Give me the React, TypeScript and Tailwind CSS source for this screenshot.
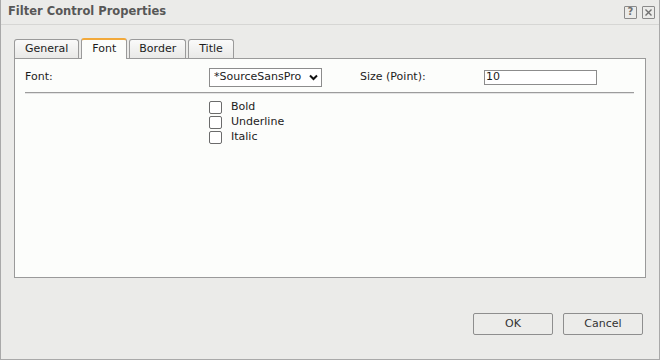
import React from 'react';

const font = { fontFamily: '"DejaVu Sans", Verdana, sans-serif' };

const Check: React.FC<{ label: string }> = ({ label }) => (
  <label className="flex items-center h-[15px]">
    <span className="w-[13px] h-[13px] border border-[#6b6b6b] rounded-[2px] bg-white mr-[9px]" />
    <span>{label}</span>
  </label>
);

const tabIdle = 'h-[19px] flex items-center border border-b-0 border-[#9a9a9a] rounded-t-[3px] bg-gradient-to-b from-[#fafafa] to-[#e9e9e7]';

export default function App() {
  return (
    <div className="w-[660px] h-[360px] bg-[#ebebe9] border-x border-b border-[#a9a9a9] flex flex-col text-[11px] text-[#1c1c1c]" style={font}>
      {/* title bar */}
      <div className="h-[25px] flex items-center justify-between border-b border-[#d6d6d4] pl-[7px] pr-[4px]">
        <span className="font-bold text-[11.5px] text-[#575757]">Filter Control Properties</span>
        <div className="flex gap-[5px]">
          <span className="w-[13px] h-[13px] border border-[#8a8a8a] rounded-[1px] flex items-center justify-center text-[10px] font-bold text-[#707070] leading-none">?</span>
          <span className="w-[13px] h-[13px] border border-[#8a8a8a] rounded-[1px] flex items-center justify-center">
            <svg width="9" height="9" viewBox="0 0 9 9"><path d="M1.5 1.5L7.5 7.5M7.5 1.5L1.5 7.5" stroke="#707070" strokeWidth="1.4" /></svg>
          </span>
        </div>
      </div>

      <div className="flex-1 flex flex-col px-[13px] pt-[13px]">
        {/* tabs */}
        <div className="flex items-end gap-[2px] h-[20px] relative z-10">
          <div className={`${tabIdle} px-[10px]`}>General</div>
          <div className="h-[21px] px-[10px] flex items-center border border-b-0 border-[#9a9a9a] border-t-2 border-t-[#f2a93b] rounded-t-[3px] bg-[#fcfdfb] -mb-[1px]">Font</div>
          <div className={`${tabIdle} px-[9px]`}>Border</div>
          <div className={`${tabIdle} px-[10px]`}>Title</div>
        </div>

        {/* panel */}
        <div className="h-[220px] border border-[#9a9a9a] bg-[#fcfdfb] px-[10px] pt-[8px]">
          <div className="flex items-center h-[20px]">
            <span className="w-[184px]">Font:</span>
            <div className="w-[113px] h-[19px] border border-[#8c8c8c] bg-white flex items-center justify-between pl-[4px] pr-[3px]">
              <span>*SourceSansPro</span>
              <svg width="9" height="7" viewBox="0 0 9 7"><path d="M1 1.5L4.5 5L8 1.5" fill="none" stroke="#111" strokeWidth="2" /></svg>
            </div>
            <span className="ml-[38px] w-[124px]">Size (Point):</span>
            <div className="w-[113px] h-[15px] border border-[#8c8c8c] bg-white flex items-center pl-[1px]">10</div>
          </div>
          <div className="mt-[5px] border-t border-[#9c9c9c] border-b border-b-[#e4e4e4] mr-[1px]" />
          <div className="flex flex-col ml-[184px] mt-[6px]">
            <Check label="Bold" />
            <Check label="Underline" />
            <Check label="Italic" />
          </div>
        </div>

        {/* buttons */}
        <div className="flex justify-end gap-[10px] mt-[35px] pr-[3px]">
          <button className="w-[80px] h-[22px] border border-[#8e8e8e] rounded-[2px] bg-[#ececea] text-[#333]">OK</button>
          <button className="w-[80px] h-[22px] border border-[#8e8e8e] rounded-[2px] bg-[#ececea] text-[#333]">Cancel</button>
        </div>
      </div>
    </div>
  );
}
